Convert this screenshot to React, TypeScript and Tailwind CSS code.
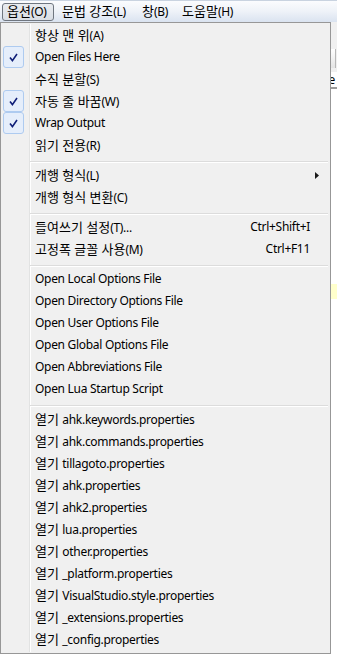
import React from "react"

type Entry =
    | { kind: "item"; label: string; checked?: boolean; shortcut?: string; submenu?: boolean }
    | { kind: "sep" }

const entries: Entry[] = [
    { kind: "item", label: "항상 맨 위(A)" },
    { kind: "item", label: "Open Files Here", checked: true },
    { kind: "item", label: "수직 분할(S)" },
    { kind: "item", label: "자동 줄 바꿈(W)", checked: true },
    { kind: "item", label: "Wrap Output", checked: true },
    { kind: "item", label: "읽기 전용(R)" },
    { kind: "sep" },
    { kind: "item", label: "개행 형식(L)", submenu: true },
    { kind: "item", label: "개행 형식 변환(C)" },
    { kind: "sep" },
    { kind: "item", label: "들여쓰기 설정(T)...", shortcut: "Ctrl+Shift+I" },
    { kind: "item", label: "고정폭 글꼴 사용(M)", shortcut: "Ctrl+F11" },
    { kind: "sep" },
    { kind: "item", label: "Open Local Options File" },
    { kind: "item", label: "Open Directory Options File" },
    { kind: "item", label: "Open User Options File" },
    { kind: "item", label: "Open Global Options File" },
    { kind: "item", label: "Open Abbreviations File" },
    { kind: "item", label: "Open Lua Startup Script" },
    { kind: "sep" },
    { kind: "item", label: "열기 ahk.keywords.properties" },
    { kind: "item", label: "열기 ahk.commands.properties" },
    { kind: "item", label: "열기 tillagoto.properties" },
    { kind: "item", label: "열기 ahk.properties" },
    { kind: "item", label: "열기 ahk2.properties" },
    { kind: "item", label: "열기 lua.properties" },
    { kind: "item", label: "열기 other.properties" },
    { kind: "item", label: "열기 _platform.properties" },
    { kind: "item", label: "열기 VisualStudio.style.properties" },
    { kind: "item", label: "열기 _extensions.properties" },
    { kind: "item", label: "열기 _config.properties" },
]

// label, box width, left padding of the text
const menuBar: [string, string, string][] = [
    ["옵션(O)", "w-[52px]", "pl-[4px]"],
    ["문법 강조(L)", "w-[82px]", "pl-[8px]"],
    ["창(B)", "w-[40px]", "pl-[6px]"],
    ["도움말(H)", "w-[70px]", "pl-[6px]"],
]

// hangul runs are drawn a bit larger, like Malgun Gothic next to its latin
const Label = ({ text }: { text: string }) => (
    <>
        {text.split(/([\uAC00-\uD7A3][\uAC00-\uD7A3 ]*)/).map((part, i) =>
            /[\uAC00-\uD7A3]/.test(part) ? (
                <span key={i} className="text-[13px] tracking-normal">
                    {part}
                </span>
            ) : (
                <span key={i}>{part}</span>
            )
        )}
    </>
)

const CheckBox = () => (
    <div className="flex h-[22px] w-[21px] items-center justify-center rounded-[3px] border border-[#aecbf0] bg-[#e5eefb]">
        <svg width="9" height="9" viewBox="0 0 9 9">
            <path d="M1 4.6 L3.4 7.6 L8 1" fill="none" stroke="#0f1e78" strokeWidth="1.6" />
        </svg>
    </div>
)

const MenuRow = ({ entry }: { entry: Extract<Entry, { kind: "item" }> }) => (
    <div className="flex h-[22px] items-center">
        <div className="flex h-full w-[28px] items-center pl-[2px]">
            {entry.checked && <CheckBox />}
        </div>
        <div className="flex-1 whitespace-pre pl-[6px] leading-[22px]">
            <Label text={entry.label} />
        </div>
        {entry.shortcut && <div className="pr-[20px] leading-[22px]">{entry.shortcut}</div>}
        {entry.submenu && (
            <div className="pr-[11px]">
                <svg width="4" height="7" viewBox="0 0 4 7">
                    <path d="M0 0 L4 3.5 L0 7 Z" fill="#1a1a1a" />
                </svg>
            </div>
        )}
    </div>
)

const Separator = () => (
    <div className="h-[8px] pt-[5px] pl-[29px] pr-[2px]">
        <div className="h-px bg-[#dcdcdc]" />
        <div className="h-px bg-white" />
    </div>
)

export default function App() {
    return (
        <div
            className="relative h-[654px] w-[337px] overflow-hidden bg-white text-[12px] tracking-[-0.3px] text-black"
            style={{ fontFamily: '"Noto Sans", "Noto Sans CJK KR", sans-serif' }}
        >
            {/* window behind the popup */}
            <div className="flex h-[22px] items-center border-t border-[#c9d3e0] bg-gradient-to-b from-[#fbfcfe] via-[#eef2f8] to-[#dae3f0] pl-[2px]">
                {menuBar.map(([label, w, pl], i) => (
                    <div
                        key={label}
                        className={
                            i === 0
                                ? `flex h-[18px] items-center whitespace-pre rounded-[3px] border border-[#6f7680] bg-gradient-to-b from-[#e9ecf0] to-[#d9dee5] ${w} ${pl}`
                                : `flex h-[18px] items-center whitespace-pre ${w} ${pl}`
                        }
                    >
                        <Label text={label} />
                    </div>
                ))}
            </div>
            <div className="h-[27px] bg-[#f0f0f0]" />
            <div className="flex h-[19px] justify-end bg-[#f0f0f0]">
                <div className="w-[5px] border-r border-[#b8b8b8] bg-gradient-to-b from-white to-[#e4e4e4]" />
                <div className="w-px" />
            </div>
            <div className="h-[4px] bg-[#f0f0f0]" />
            <div className="flex h-[15px] justify-end leading-[15px]">
                <span className="pr-[2px]">e</span>
            </div>
            <div className="h-[2px] bg-[#9a9a9a]" />
            <div className="h-[195px]" />
            <div className="h-[15px] bg-[#ffffcc]" />

            {/* options popup menu */}
            <div className="absolute left-0 top-[22px] h-[632px] w-[331px] border border-[#979797] bg-[#f0f0f0] pt-px">
                <div className="absolute bottom-px left-[28px] top-px w-px bg-[#e2e3e3]" />
                <div className="absolute bottom-px left-[29px] top-px w-px bg-white" />
                <div className="relative">
                    {entries.map((entry, i) =>
                        entry.kind === "sep" ? <Separator key={i} /> : <MenuRow key={i} entry={entry} />
                    )}
                </div>
            </div>
        </div>
    )
}
